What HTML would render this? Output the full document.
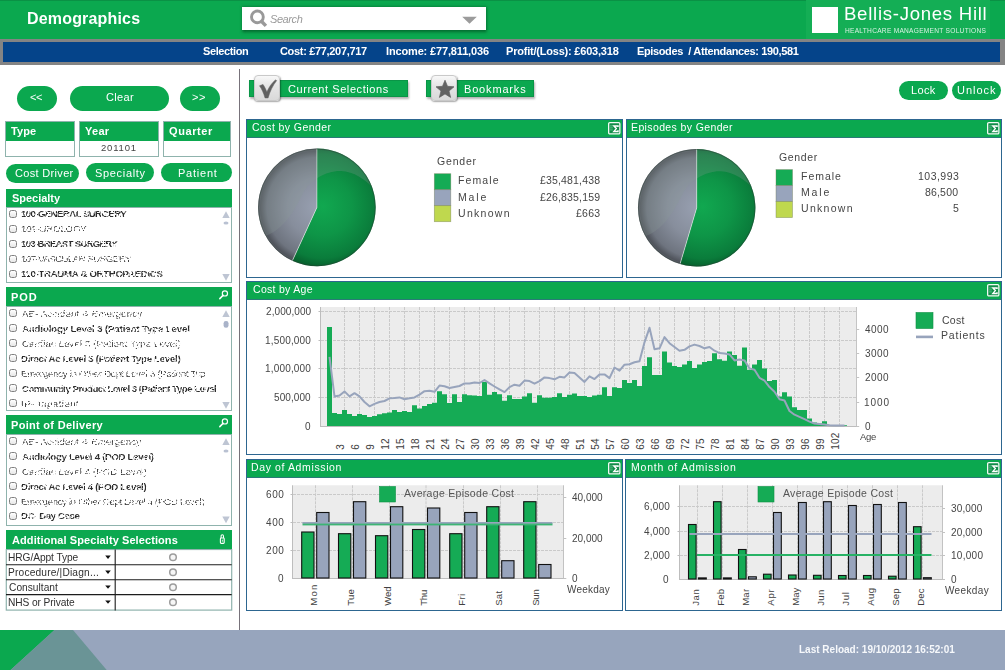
<!DOCTYPE html>
<html><head><meta charset="utf-8"><title>Demographics</title>
<style>
*{box-sizing:border-box;margin:0;padding:0}
html,body{width:1005px;height:670px;overflow:hidden;background:#fff;font-family:"Liberation Sans",sans-serif}
.abs,.t,.hd,.bx,.cb,.pn,.btn{position:absolute}
.t{white-space:pre;line-height:1;z-index:5;will-change:transform}
.btn{background:#0ba84f;border-radius:14px}
.hd{background:#0ba84f;left:6px;width:226px}
.bx{left:6px;width:226px;background:#fff;border:1px solid #8fb3ad}
.cb{left:9.3px;width:8px;height:8px;border:1px solid #808080;border-radius:2.5px;background:linear-gradient(#fff,#e6e6e6)}
.o1{filter:url(#ob1)}.o2{filter:url(#ob2)}
.pn{border:1px solid #2d6690;background:#fff}
.pn>div{background:#0ba84f;height:18px;border-bottom:1px solid #2a7a78}
svg text.xl{font-size:10px;fill:#3c3c3c;letter-spacing:0.25px}
svg text.xl2{font-size:9.6px;fill:#404040}
svg .g{stroke:#cacaca;stroke-width:1;stroke-dasharray:3 1}
.ic{width:26px;height:26px;border-radius:4px;border:1px solid #c9c9c9;background:linear-gradient(#f8f8f8,#e6e6e6 40%,#d9d9d9);box-shadow:0.5px 1px 1.5px rgba(0,0,0,.35)}
</style></head><body>
<svg width="0" height="0" style="position:absolute"><defs>
<filter id="ob1" x="0" y="0" width="100%" height="100%"><feTurbulence type="fractalNoise" baseFrequency="0.55 0.4" numOctaves="1" seed="4"/><feColorMatrix type="matrix" values="0 0 0 0 0 0 0 0 0 0 0 0 0 0 0 9 0 0 0 -3.4" result="m"/><feComposite in="SourceGraphic" in2="m" operator="in"/></filter>
<filter id="ob2" x="0" y="0" width="100%" height="100%"><feTurbulence type="fractalNoise" baseFrequency="0.6 0.45" numOctaves="1" seed="9"/><feColorMatrix type="matrix" values="0 0 0 0 0 0 0 0 0 0 0 0 0 0 0 22 0 0 0 -10.2" result="m"/><feComposite in="SourceGraphic" in2="m" operator="in"/></filter>
</defs></svg>
<!-- header -->
<div class="abs" style="left:0;top:0;width:1005px;height:38.5px;background:#0ba84f;border-top:1px solid #0a9145"></div>
<div class="abs" style="left:806px;top:0;width:184px;height:38.5px;background:#14ae55"></div>
<div class="abs" style="left:812px;top:7px;width:26px;height:25.5px;background:#fff"></div>
<div class="abs" style="left:242px;top:7.4px;width:244px;height:23px;background:#fff;box-shadow:0.5px 1px 3px 0.8px rgba(0,75,32,.75)"></div>
<svg class="abs" style="left:246px;top:8px" width="24" height="22"><circle cx="11.4" cy="8.9" r="5.9" fill="none" stroke="#999" stroke-width="2.9"/><line x1="15.2" y1="13" x2="19.9" y2="17.9" stroke="#999" stroke-width="3.4" stroke-linecap="butt"/></svg>
<svg class="abs" style="left:460px;top:14px" width="20" height="12"><path d="M2.2,2.8H16.8L9.5,9.8Z" fill="#9b9b9b"/></svg>
<div class="abs" style="left:0;top:38.5px;width:1005px;height:26.5px;background:#848484"></div>
<div class="abs" style="left:3px;top:42px;width:997px;height:20px;background:#05448a"></div>
<!-- left column -->
<div class="abs" style="left:239px;top:69px;width:1px;height:561px;background:#77727a"></div>
<div class="btn" style="left:17px;top:85.5px;width:40px;height:25.5px"></div>
<div class="btn" style="left:70px;top:85.5px;width:99px;height:25.5px"></div>
<div class="btn" style="left:180px;top:85.5px;width:40px;height:25.5px"></div>
<div class="btn" style="left:6px;top:164px;width:73px;height:19px"></div>
<div class="btn" style="left:86px;top:163px;width:68px;height:19px"></div>
<div class="btn" style="left:161px;top:163px;width:70.6px;height:19px"></div>
<div class="bx" style="left:5px;top:121.3px;width:70px;height:35.4px"><div style="background:#0ba84f;height:18.3px"></div></div>
<div class="bx" style="left:79px;top:121.3px;width:80px;height:35.4px"><div style="background:#0ba84f;height:18.3px"></div></div>
<div class="bx" style="left:163px;top:121.3px;width:68px;height:35.4px"><div style="background:#0ba84f;height:18.3px"></div></div>
<!-- specialty -->
<div class="hd" style="top:188.5px;height:19px"></div>
<div class="bx" style="top:207px;height:76px"></div>
<i class="cb" style="top:210.10000000000002px"></i><i class="cb" style="top:225.10000000000002px"></i><i class="cb" style="top:240.10000000000002px"></i><i class="cb" style="top:255.10000000000002px"></i><i class="cb" style="top:270.1px"></i><svg class="abs" style="left:219.6px;top:208.5px" width="12" height="73.5"><path d="M6,2.2L9.7,8.9H2.3Z" fill="#bec5d3"/><path d="M6,71.7L9.7,65.0H2.3Z" fill="#bec5d3"/><ellipse cx="6" cy="14.0" rx="2.5" ry="1.5" fill="#b9c1d2"/></svg>
<!-- POD -->
<div class="hd" style="top:287.3px;height:19px"></div><svg class="abs" style="left:218px;top:289.2px" width="12" height="12"><circle cx="6.9" cy="4.4" r="2.6" fill="none" stroke="#fff" stroke-width="1.15"/><line x1="5" y1="6.4" x2="1.8" y2="9.6" stroke="#fff" stroke-width="1.5" stroke-linecap="round"/></svg>
<div class="bx" style="top:306px;height:105px"></div>
<i class="cb" style="top:309.1px"></i><i class="cb" style="top:324.1px"></i><i class="cb" style="top:339.1px"></i><i class="cb" style="top:354.1px"></i><i class="cb" style="top:369.1px"></i><i class="cb" style="top:384.1px"></i><i class="cb" style="top:399.1px"></i><svg class="abs" style="left:219.6px;top:307.5px" width="12" height="102.5"><path d="M6,2.2L9.7,8.9H2.3Z" fill="#bec5d3"/><path d="M6,100.7L9.7,94.0H2.3Z" fill="#bec5d3"/><rect x="3.6" y="13.0" width="4.9" height="6.8" rx="2.3" fill="#a9b3c9"/></svg>
<!-- point of delivery -->
<div class="hd" style="top:414.8px;height:19.6px"></div><svg class="abs" style="left:218px;top:417.2px" width="12" height="12"><circle cx="6.9" cy="4.4" r="2.6" fill="none" stroke="#fff" stroke-width="1.15"/><line x1="5" y1="6.4" x2="1.8" y2="9.6" stroke="#fff" stroke-width="1.5" stroke-linecap="round"/></svg>
<div class="bx" style="top:434px;height:91.5px"></div>
<i class="cb" style="top:437.1px"></i><i class="cb" style="top:452.1px"></i><i class="cb" style="top:467.1px"></i><i class="cb" style="top:482.1px"></i><i class="cb" style="top:497.1px"></i><i class="cb" style="top:512.0999999999999px"></i><svg class="abs" style="left:219.6px;top:435.5px" width="12" height="89.0"><path d="M6,2.2L9.7,8.9H2.3Z" fill="#bec5d3"/><path d="M6,87.2L9.7,80.5H2.3Z" fill="#bec5d3"/><ellipse cx="6" cy="15.0" rx="2.5" ry="1.5" fill="#b9c1d2"/></svg>
<!-- additional -->
<div class="hd" style="top:530.2px;height:19.3px"></div>
<svg class="abs" style="left:217px;top:533px" width="12" height="14"><rect x="3.4" y="5" width="3.8" height="5.4" rx="0.8" fill="#0ba84f" stroke="#fff" stroke-width="1.1"/><path d="M4.1,5V3.2a1.2,1.4 0 0 1 2.4,0V5" fill="none" stroke="#fff" stroke-width="1.05"/><rect x="4.9" y="6.7" width="0.8" height="2" fill="#fff"/></svg>
<svg class="abs" style="left:5px;top:549px" width="229" height="63">
<rect x="1.3" y="0.5" width="225.4" height="60.6" fill="#fff" stroke="#8fb3ad" stroke-width="1.2"/>
<g stroke="#1c1c1c" stroke-width="1.1"><line x1="1" x2="226.7" y1="15.7" y2="15.7"/><line x1="1" x2="226.7" y1="30.7" y2="30.7"/><line x1="1" x2="226.7" y1="45.6" y2="45.6"/><line x1="110.2" x2="110.2" y1="0.5" y2="61.5"/></g>
<g fill="#111"><path d="M100.2,6.6h5.6l-2.8,3.3z"/><path d="M100.2,21.6h5.6l-2.8,3.3z"/><path d="M100.2,36.5h5.6l-2.8,3.3z"/><path d="M100.2,51.5h5.6l-2.8,3.3z"/></g>
<g fill="#f6f6f6" stroke="#9d9d9d" stroke-width="1.5"><circle cx="168" cy="8.3" r="3.3"/><circle cx="168" cy="23.3" r="3.3"/><circle cx="168" cy="38.2" r="3.3"/><circle cx="168" cy="53.2" r="3.3"/></g>
</svg>
<!-- toolbar -->
<div class="abs" style="left:249px;top:80px;width:159px;height:16.7px;background:#0ba84f;border:1px solid #0a9547;box-shadow:1px 1.5px 2px rgba(0,0,0,.3)"></div>
<div class="abs ic" style="left:254.3px;top:75.2px"></div>
<svg class="abs" style="left:254.5px;top:75.5px;z-index:3" width="26" height="26"><path d="M4.5,9.8L8,8.4C9.6,10.8 11,13.5 11.9,16C14,11 16.8,7 20.4,3.9L21.7,4.6C17.8,9.5 15,15.2 13.1,21.9H10C8.6,17 6.8,13 4.5,9.8Z" fill="#606060" stroke="#606060" stroke-width="0.5" stroke-linejoin="round"/></svg>
<div class="abs" style="left:426px;top:80px;width:108px;height:16.7px;background:#0ba84f;border:1px solid #0a9547;box-shadow:1px 1.5px 2px rgba(0,0,0,.3)"></div>
<div class="abs ic" style="left:431.3px;top:75.2px"></div>
<svg class="abs" style="left:431.5px;top:75.5px;z-index:3" width="26" height="26"><path d="M13,4.2L15.5,10.3 22,10.8 17,15 18.6,21.4 13,17.9 7.4,21.4 9,15 4,10.8 10.5,10.3Z" fill="#626262" stroke="#626262" stroke-width="0.7" stroke-linejoin="round"/></svg>
<div class="btn" style="left:899px;top:81px;width:49px;height:18.5px"></div>
<div class="btn" style="left:952px;top:81px;width:49px;height:18.5px"></div>
<!-- panels -->
<div class="pn" style="left:246px;top:119px;width:377px;height:159px"><div></div></div>
<div class="pn" style="left:626px;top:119px;width:376px;height:159px"><div></div></div>
<div class="pn" style="left:246px;top:281px;width:756px;height:174px"><div></div></div>
<div class="pn" style="left:246px;top:459px;width:377px;height:152px"><div></div></div>
<div class="pn" style="left:625px;top:459px;width:377px;height:152px"><div></div></div>
<svg class="abs" style="left:0;top:0;z-index:2" width="1005" height="630" font-family="Liberation Sans, sans-serif">
<g transform="translate(608,122)"><rect x="0.65" y="0.65" width="11.2" height="11.3" rx="1.2" fill="#128d48" stroke="#f1faf4" stroke-width="1.3"/><path d="M2,3.9H4.8M2,5.9H4.8M2,7.9H4.8" stroke="#58c588" stroke-width="0.9"/><path d="M10,5V3.9H5.9L8.3,6.6 5.9,9.4H10V8.3" fill="none" stroke="#fff" stroke-width="1.45" stroke-linejoin="miter"/></g><g transform="translate(987,122)"><rect x="0.65" y="0.65" width="11.2" height="11.3" rx="1.2" fill="#128d48" stroke="#f1faf4" stroke-width="1.3"/><path d="M2,3.9H4.8M2,5.9H4.8M2,7.9H4.8" stroke="#58c588" stroke-width="0.9"/><path d="M10,5V3.9H5.9L8.3,6.6 5.9,9.4H10V8.3" fill="none" stroke="#fff" stroke-width="1.45" stroke-linejoin="miter"/></g><g transform="translate(987,284)"><rect x="0.65" y="0.65" width="11.2" height="11.3" rx="1.2" fill="#128d48" stroke="#f1faf4" stroke-width="1.3"/><path d="M2,3.9H4.8M2,5.9H4.8M2,7.9H4.8" stroke="#58c588" stroke-width="0.9"/><path d="M10,5V3.9H5.9L8.3,6.6 5.9,9.4H10V8.3" fill="none" stroke="#fff" stroke-width="1.45" stroke-linejoin="miter"/></g><g transform="translate(608,462)"><rect x="0.65" y="0.65" width="11.2" height="11.3" rx="1.2" fill="#128d48" stroke="#f1faf4" stroke-width="1.3"/><path d="M2,3.9H4.8M2,5.9H4.8M2,7.9H4.8" stroke="#58c588" stroke-width="0.9"/><path d="M10,5V3.9H5.9L8.3,6.6 5.9,9.4H10V8.3" fill="none" stroke="#fff" stroke-width="1.45" stroke-linejoin="miter"/></g><g transform="translate(987,462)"><rect x="0.65" y="0.65" width="11.2" height="11.3" rx="1.2" fill="#128d48" stroke="#f1faf4" stroke-width="1.3"/><path d="M2,3.9H4.8M2,5.9H4.8M2,7.9H4.8" stroke="#58c588" stroke-width="0.9"/><path d="M10,5V3.9H5.9L8.3,6.6 5.9,9.4H10V8.3" fill="none" stroke="#fff" stroke-width="1.45" stroke-linejoin="miter"/></g>
<defs><radialGradient id="gga" cx="322.9" cy="206.4" r="64.8" fx="322.9" fy="206.4" gradientUnits="userSpaceOnUse"><stop offset="0" stop-color="#11a850"/><stop offset="0.45" stop-color="#0e9547"/><stop offset="0.8" stop-color="#0a7c3b"/><stop offset="0.93" stop-color="#07612e"/><stop offset="1" stop-color="#06572a"/></radialGradient><radialGradient id="gra" cx="316.9" cy="207.4" r="58.8" gradientUnits="userSpaceOnUse"><stop offset="0" stop-color="#98a0b1"/><stop offset="0.5" stop-color="#878e9c"/><stop offset="0.85" stop-color="#6e747f"/><stop offset="0.96" stop-color="#50545c"/><stop offset="1" stop-color="#5c6169"/></radialGradient><clipPath id="cpa"><circle cx="316.9" cy="207.4" r="58.8"/></clipPath></defs>
<path d="M316.9,207.4L316.9,148.60000000000002A58.8,58.8 0 1 1 292.33,260.82Z" fill="url(#gga)"/>
<path d="M316.9,207.4L292.33,260.82A58.8,58.8 0 0 1 316.9,148.60000000000002Z" fill="url(#gra)"/>
<g clip-path="url(#cpa)"><g transform="translate(316.9,207.4)"><path fill="#8a9a96" fill-opacity="0.26" d="M-60,31C-38,27 -26,10 -15,-12C-8,-28 10,-37 24,-36.5C38,-36 50,-27 62,-14V-70H-70Z"/></g></g>
<line x1="316.9" y1="207.4" x2="316.9" y2="148.60000000000002" stroke="#d8f0e0" stroke-width="0.7" stroke-opacity="0.85"/>
<line x1="316.9" y1="207.4" x2="292.33" y2="260.82" stroke="#e4ece8" stroke-width="0.7" stroke-opacity="0.9"/>
<circle cx="316.9" cy="207.4" r="58.4" fill="none" stroke="#2d3b36" stroke-opacity="0.45" stroke-width="1"/><rect x="434.3" y="173.7" width="16.5" height="16" fill="#15ab55" stroke="#6f7a55" stroke-opacity="0.55" stroke-width="0.7"/><rect x="434.3" y="189.7" width="16.5" height="16" fill="#98a4bc" stroke="#6f7a55" stroke-opacity="0.55" stroke-width="0.7"/><rect x="434.3" y="205.7" width="16.5" height="16" fill="#bfd84e" stroke="#6f7a55" stroke-opacity="0.55" stroke-width="0.7"/>
<defs><radialGradient id="ggb" cx="702.7" cy="206.8" r="64.7" fx="702.7" fy="206.8" gradientUnits="userSpaceOnUse"><stop offset="0" stop-color="#11a850"/><stop offset="0.45" stop-color="#0e9547"/><stop offset="0.8" stop-color="#0a7c3b"/><stop offset="0.93" stop-color="#07612e"/><stop offset="1" stop-color="#06572a"/></radialGradient><radialGradient id="grb" cx="696.7" cy="207.8" r="58.7" gradientUnits="userSpaceOnUse"><stop offset="0" stop-color="#98a0b1"/><stop offset="0.5" stop-color="#878e9c"/><stop offset="0.85" stop-color="#6e747f"/><stop offset="0.96" stop-color="#50545c"/><stop offset="1" stop-color="#5c6169"/></radialGradient><clipPath id="cpb"><circle cx="696.7" cy="207.8" r="58.7"/></clipPath></defs>
<path d="M696.7,207.8L696.7,149.10000000000002A58.7,58.7 0 1 1 680.03,264.08Z" fill="url(#ggb)"/>
<path d="M696.7,207.8L680.03,264.08A58.7,58.7 0 0 1 696.7,149.10000000000002Z" fill="url(#grb)"/>
<g clip-path="url(#cpb)"><g transform="translate(696.7,207.8)"><path fill="#8a9a96" fill-opacity="0.26" d="M-60,31C-38,27 -26,10 -15,-12C-8,-28 10,-37 24,-36.5C38,-36 50,-27 62,-14V-70H-70Z"/></g></g>
<line x1="696.7" y1="207.8" x2="696.7" y2="149.10000000000002" stroke="#d8f0e0" stroke-width="0.7" stroke-opacity="0.85"/>
<line x1="696.7" y1="207.8" x2="680.03" y2="264.08" stroke="#e4ece8" stroke-width="0.7" stroke-opacity="0.9"/>
<circle cx="696.7" cy="207.8" r="58.300000000000004" fill="none" stroke="#2d3b36" stroke-opacity="0.45" stroke-width="1"/><rect x="776" y="169.6" width="16.5" height="16" fill="#15ab55" stroke="#6f7a55" stroke-opacity="0.55" stroke-width="0.7"/><rect x="776" y="185.6" width="16.5" height="16" fill="#98a4bc" stroke="#6f7a55" stroke-opacity="0.55" stroke-width="0.7"/><rect x="776" y="201.6" width="16.5" height="16" fill="#bfd84e" stroke="#6f7a55" stroke-opacity="0.55" stroke-width="0.7"/>
<rect x="320.5" y="307" width="536" height="119" fill="#ececec"/>
<line x1="321" x2="856" y1="311.5" y2="311.5" class="g"/>
<line x1="321" x2="856" y1="340.5" y2="340.5" class="g"/>
<line x1="321" x2="856" y1="368.5" y2="368.5" class="g"/>
<line x1="321" x2="856" y1="397.5" y2="397.5" class="g"/>
<line x1="344.5" x2="344.5" y1="307" y2="426" class="g"/>
<line x1="359.5" x2="359.5" y1="307" y2="426" class="g"/>
<line x1="374.5" x2="374.5" y1="307" y2="426" class="g"/>
<line x1="389.5" x2="389.5" y1="307" y2="426" class="g"/>
<line x1="404.5" x2="404.5" y1="307" y2="426" class="g"/>
<line x1="419.5" x2="419.5" y1="307" y2="426" class="g"/>
<line x1="434.5" x2="434.5" y1="307" y2="426" class="g"/>
<line x1="449.5" x2="449.5" y1="307" y2="426" class="g"/>
<line x1="464.5" x2="464.5" y1="307" y2="426" class="g"/>
<line x1="479.5" x2="479.5" y1="307" y2="426" class="g"/>
<line x1="494.5" x2="494.5" y1="307" y2="426" class="g"/>
<line x1="509.5" x2="509.5" y1="307" y2="426" class="g"/>
<line x1="524.5" x2="524.5" y1="307" y2="426" class="g"/>
<line x1="539.5" x2="539.5" y1="307" y2="426" class="g"/>
<line x1="554.5" x2="554.5" y1="307" y2="426" class="g"/>
<line x1="569.5" x2="569.5" y1="307" y2="426" class="g"/>
<line x1="584.5" x2="584.5" y1="307" y2="426" class="g"/>
<line x1="599.5" x2="599.5" y1="307" y2="426" class="g"/>
<line x1="614.5" x2="614.5" y1="307" y2="426" class="g"/>
<line x1="629.5" x2="629.5" y1="307" y2="426" class="g"/>
<line x1="644.5" x2="644.5" y1="307" y2="426" class="g"/>
<line x1="659.5" x2="659.5" y1="307" y2="426" class="g"/>
<line x1="674.5" x2="674.5" y1="307" y2="426" class="g"/>
<line x1="689.5" x2="689.5" y1="307" y2="426" class="g"/>
<line x1="704.5" x2="704.5" y1="307" y2="426" class="g"/>
<line x1="719.5" x2="719.5" y1="307" y2="426" class="g"/>
<line x1="734.5" x2="734.5" y1="307" y2="426" class="g"/>
<line x1="749.5" x2="749.5" y1="307" y2="426" class="g"/>
<line x1="764.5" x2="764.5" y1="307" y2="426" class="g"/>
<line x1="779.5" x2="779.5" y1="307" y2="426" class="g"/>
<line x1="794.5" x2="794.5" y1="307" y2="426" class="g"/>
<line x1="809.5" x2="809.5" y1="307" y2="426" class="g"/>
<line x1="824.5" x2="824.5" y1="307" y2="426" class="g"/>
<line x1="839.5" x2="839.5" y1="307" y2="426" class="g"/>
<path d="M327.0,426.0L327.0,327.1L332.0,327.1L332.0,413.0L337.0,413.0L337.0,414.0L342.0,414.0L342.0,410.0L347.0,410.0L347.0,414.0L352.0,414.0L352.0,416.0L357.0,416.0L357.0,414.0L362.0,414.0L362.0,415.0L367.0,415.0L367.0,417.0L372.0,417.0L372.0,416.0L377.0,416.0L377.0,414.3L382.0,414.3L382.0,413.3L387.0,413.3L387.0,412.4L392.0,412.4L392.0,410.0L397.0,410.0L397.0,412.0L402.0,412.0L402.0,411.0L407.0,411.0L407.0,412.0L412.0,412.0L412.0,405.3L417.0,405.3L417.0,408.6L422.0,408.6L422.0,406.0L427.0,406.0L427.0,404.0L432.0,404.0L432.0,402.7L437.0,402.7L437.0,391.3L442.0,391.3L442.0,394.3L447.0,394.3L447.0,403.0L452.0,403.0L452.0,394.3L457.0,394.3L457.0,402.0L462.0,402.0L462.0,394.3L467.0,394.3L467.0,395.2L472.0,395.2L472.0,395.6L477.0,395.6L477.0,396.1L482.0,396.1L482.0,382.0L487.0,382.0L487.0,394.7L492.0,394.7L492.0,391.9L497.0,391.9L497.0,394.3L502.0,394.3L502.0,400.8L507.0,400.8L507.0,395.2L512.0,395.2L512.0,399.0L517.0,399.0L517.0,399.0L522.0,399.0L522.0,396.5L527.0,396.5L527.0,393.2L532.0,393.2L532.0,402.7L537.0,402.7L537.0,395.2L542.0,395.2L542.0,397.8L547.0,397.8L547.0,397.8L552.0,397.8L552.0,397.1L557.0,397.1L557.0,393.2L562.0,393.2L562.0,396.9L567.0,396.9L567.0,394.7L572.0,394.7L572.0,393.4L577.0,393.4L577.0,396.0L582.0,396.0L582.0,396.0L587.0,396.0L587.0,396.9L592.0,396.9L592.0,395.6L597.0,395.6L597.0,394.7L602.0,394.7L602.0,387.2L607.0,387.2L607.0,396.1L612.0,396.1L612.0,387.2L617.0,387.2L617.0,388.1L622.0,388.1L622.0,380.1L627.0,380.1L627.0,383.1L632.0,383.1L632.0,380.1L637.0,380.1L637.0,385.9L642.0,385.9L642.0,366.1L647.0,366.1L647.0,357.3L652.0,357.3L652.0,375.1L657.0,375.1L657.0,375.1L662.0,375.1L662.0,351.4L667.0,351.4L667.0,362.4L672.0,362.4L672.0,366.1L677.0,366.1L677.0,367.0L682.0,367.0L682.0,364.4L687.0,364.4L687.0,361.1L692.0,361.1L692.0,368.0L697.0,368.0L697.0,364.4L702.0,364.4L702.0,362.0L707.0,362.0L707.0,361.1L712.0,361.1L712.0,353.2L717.0,353.2L717.0,359.2L722.0,359.2L722.0,360.7L727.0,360.7L727.0,351.4L732.0,351.4L732.0,355.1L737.0,355.1L737.0,365.7L742.0,365.7L742.0,347.5L747.0,347.5L747.0,369.8L752.0,369.8L752.0,364.4L757.0,364.4L757.0,360.1L762.0,360.1L762.0,368.5L767.0,368.5L767.0,381.0L772.0,381.0L772.0,380.1L777.0,380.1L777.0,396.5L782.0,396.5L782.0,392.2L787.0,392.2L787.0,396.5L792.0,396.5L792.0,407.3L797.0,407.3L797.0,410.1L802.0,410.1L802.0,410.1L807.0,410.1L807.0,418.4L812.0,418.4L812.0,422.6L817.0,422.6L817.0,423.6L822.0,423.6L822.0,421.3L827.0,421.3L827.0,424.9L832.0,424.9L832.0,425.2L837.0,425.2L837.0,425.2L842.0,425.2L842.0,425.2L847.0,425.2L847.0,426.0Z" fill="#15ab55"/>
<line x1="320.5" x2="320.5" y1="307" y2="426.5" stroke="#bdbdbd"/>
<line x1="320" x2="857" y1="426.5" y2="426.5" stroke="#bdbdbd"/>
<line x1="856.5" x2="856.5" y1="307" y2="426.5" stroke="#c4c4c4"/>
<line x1="318.5" x2="321" y1="311.5" y2="311.5" stroke="#bdbdbd"/>
<line x1="318.5" x2="321" y1="340.5" y2="340.5" stroke="#bdbdbd"/>
<line x1="318.5" x2="321" y1="368.5" y2="368.5" stroke="#bdbdbd"/>
<line x1="318.5" x2="321" y1="397.5" y2="397.5" stroke="#bdbdbd"/>
<line x1="857" x2="859.2" y1="329.5" y2="329.5" stroke="#c4c4c4"/>
<line x1="857" x2="859.2" y1="353.5" y2="353.5" stroke="#c4c4c4"/>
<line x1="857" x2="859.2" y1="377.5" y2="377.5" stroke="#c4c4c4"/>
<line x1="857" x2="859.2" y1="402.5" y2="402.5" stroke="#c4c4c4"/>
<line x1="857" x2="859.2" y1="426.5" y2="426.5" stroke="#c4c4c4"/>
<polyline points="329.5,356.9 334.5,396.4 339.5,395.5 344.5,391.4 349.5,396.4 354.5,393.2 359.5,396.4 364.5,402.0 369.5,406.3 374.5,403.9 379.5,402.0 384.5,401.0 389.5,398.3 394.5,398.0 399.5,397.4 404.5,399.2 409.5,398.3 414.5,397.4 419.5,394.6 424.5,391.2 429.5,390.8 434.5,391.8 439.5,385.6 444.5,386.2 449.5,388.0 454.5,387.0 459.5,386.0 464.5,383.4 469.5,383.4 474.5,382.4 479.5,383.0 484.5,380.0 489.5,383.4 494.5,386.5 499.5,389.3 504.5,392.1 509.5,387.1 514.5,384.7 519.5,385.8 524.5,380.6 529.5,381.1 534.5,383.7 539.5,381.1 544.5,377.4 549.5,378.1 554.5,379.3 559.5,376.8 564.5,377.4 569.5,372.5 574.5,373.1 579.5,377.4 584.5,381.9 589.5,376.3 594.5,379.1 599.5,374.4 604.5,374.4 609.5,378.1 614.5,367.5 619.5,370.7 624.5,364.7 629.5,364.3 634.5,362.3 639.5,361.3 644.5,342.3 649.5,327.8 654.5,349.2 659.5,348.3 664.5,337.1 669.5,343.2 674.5,347.0 679.5,350.7 684.5,349.8 689.5,346.4 694.5,344.6 699.5,346.0 704.5,348.3 709.5,347.0 714.5,350.7 719.5,353.1 724.5,353.5 729.5,354.4 734.5,360.4 739.5,359.5 744.5,360.4 749.5,368.4 754.5,369.7 759.5,377.8 764.5,380.6 769.5,387.1 774.5,391.8 779.5,399.2 784.5,400.5 789.5,411.0 794.5,414.7 799.5,416.9 804.5,419.2 809.5,421.6 814.5,423.5 819.5,424.0 824.5,424.4 829.5,425.3 834.5,425.5 839.5,425.5 844.5,425.5" fill="none" stroke="#98a4bc" stroke-width="2" stroke-linejoin="round"/>
<text transform="translate(343.7,449.8) rotate(-90)" class="xl">3</text>
<text transform="translate(358.7,449.8) rotate(-90)" class="xl">6</text>
<text transform="translate(373.7,449.8) rotate(-90)" class="xl">9</text>
<text transform="translate(388.7,449.8) rotate(-90)" class="xl">12</text>
<text transform="translate(403.7,449.8) rotate(-90)" class="xl">15</text>
<text transform="translate(418.7,449.8) rotate(-90)" class="xl">18</text>
<text transform="translate(433.7,449.8) rotate(-90)" class="xl">21</text>
<text transform="translate(448.7,449.8) rotate(-90)" class="xl">24</text>
<text transform="translate(463.7,449.8) rotate(-90)" class="xl">27</text>
<text transform="translate(478.7,449.8) rotate(-90)" class="xl">30</text>
<text transform="translate(493.7,449.8) rotate(-90)" class="xl">33</text>
<text transform="translate(508.7,449.8) rotate(-90)" class="xl">36</text>
<text transform="translate(523.7,449.8) rotate(-90)" class="xl">39</text>
<text transform="translate(538.7,449.8) rotate(-90)" class="xl">42</text>
<text transform="translate(553.7,449.8) rotate(-90)" class="xl">45</text>
<text transform="translate(568.7,449.8) rotate(-90)" class="xl">48</text>
<text transform="translate(583.7,449.8) rotate(-90)" class="xl">51</text>
<text transform="translate(598.7,449.8) rotate(-90)" class="xl">54</text>
<text transform="translate(613.7,449.8) rotate(-90)" class="xl">57</text>
<text transform="translate(628.7,449.8) rotate(-90)" class="xl">60</text>
<text transform="translate(643.7,449.8) rotate(-90)" class="xl">63</text>
<text transform="translate(658.7,449.8) rotate(-90)" class="xl">66</text>
<text transform="translate(673.7,449.8) rotate(-90)" class="xl">69</text>
<text transform="translate(688.7,449.8) rotate(-90)" class="xl">72</text>
<text transform="translate(703.7,449.8) rotate(-90)" class="xl">75</text>
<text transform="translate(718.7,449.8) rotate(-90)" class="xl">78</text>
<text transform="translate(733.7,449.8) rotate(-90)" class="xl">81</text>
<text transform="translate(748.7,449.8) rotate(-90)" class="xl">84</text>
<text transform="translate(763.7,449.8) rotate(-90)" class="xl">87</text>
<text transform="translate(778.7,449.8) rotate(-90)" class="xl">90</text>
<text transform="translate(793.7,449.8) rotate(-90)" class="xl">93</text>
<text transform="translate(808.7,449.8) rotate(-90)" class="xl">96</text>
<text transform="translate(823.7,449.8) rotate(-90)" class="xl">99</text>
<text transform="translate(838.7,449.8) rotate(-90)" class="xl">102</text>
<rect x="916" y="312.5" width="17" height="16" fill="#15ab55" stroke="#0e8f45" stroke-width="0.6"/>
<rect x="916" y="335.6" width="17" height="2.6" fill="#98a4bc"/><rect x="292.5" y="485.3" width="271" height="92.7" fill="#ececec"/>
<line x1="293" x2="563.5" y1="494.5" y2="494.5" class="g"/>
<line x1="293" x2="563.5" y1="522.5" y2="522.5" class="g"/>
<line x1="293" x2="563.5" y1="550.5" y2="550.5" class="g"/>
<line x1="315.5" x2="315.5" y1="485.3" y2="578" class="g"/>
<line x1="352.5" x2="352.5" y1="485.3" y2="578" class="g"/>
<line x1="389.5" x2="389.5" y1="485.3" y2="578" class="g"/>
<line x1="426" x2="426" y1="485.3" y2="578" class="g"/>
<line x1="463.5" x2="463.5" y1="485.3" y2="578" class="g"/>
<line x1="500.5" x2="500.5" y1="485.3" y2="578" class="g"/>
<line x1="537.5" x2="537.5" y1="485.3" y2="578" class="g"/>
<line x1="292.5" x2="292.5" y1="485.3" y2="578.5" stroke="#bdbdbd"/>
<line x1="292" x2="564" y1="578.5" y2="578.5" stroke="#bdbdbd"/>
<line x1="563.5" x2="563.5" y1="485.3" y2="578.5" stroke="#c2c2c2"/>
<line x1="290.5" x2="293" y1="494.5" y2="494.5" stroke="#bdbdbd"/>
<line x1="290.5" x2="293" y1="522.5" y2="522.5" stroke="#bdbdbd"/>
<line x1="290.5" x2="293" y1="550.5" y2="550.5" stroke="#bdbdbd"/>
<line x1="564" x2="566.3" y1="497.5" y2="497.5" stroke="#c2c2c2"/>
<line x1="564" x2="566.3" y1="538.5" y2="538.5" stroke="#c2c2c2"/>
<line x1="564" x2="566.3" y1="578.5" y2="578.5" stroke="#c2c2c2"/>
<rect x="301.7" y="532.0" width="12.3" height="46.0" fill="#15ab55" stroke="#111" stroke-width="1.1"/>
<rect x="316.7" y="512.5" width="12.3" height="65.5" fill="#98a4bc" stroke="#111" stroke-width="1.1"/>
<rect x="338.5" y="533.7" width="12.3" height="44.3" fill="#15ab55" stroke="#111" stroke-width="1.1"/>
<rect x="353.5" y="501.7" width="12.3" height="76.3" fill="#98a4bc" stroke="#111" stroke-width="1.1"/>
<rect x="375.5" y="535.7" width="12.3" height="42.3" fill="#15ab55" stroke="#111" stroke-width="1.1"/>
<rect x="390.5" y="506.7" width="12.3" height="71.3" fill="#98a4bc" stroke="#111" stroke-width="1.1"/>
<rect x="412.5" y="529.5" width="12.3" height="48.5" fill="#15ab55" stroke="#111" stroke-width="1.1"/>
<rect x="427.5" y="508.0" width="12.3" height="70.0" fill="#98a4bc" stroke="#111" stroke-width="1.1"/>
<rect x="449.7" y="533.7" width="12.3" height="44.3" fill="#15ab55" stroke="#111" stroke-width="1.1"/>
<rect x="464.7" y="512.5" width="12.3" height="65.5" fill="#98a4bc" stroke="#111" stroke-width="1.1"/>
<rect x="486.7" y="506.7" width="12.3" height="71.3" fill="#15ab55" stroke="#111" stroke-width="1.1"/>
<rect x="501.7" y="560.7" width="12.3" height="17.3" fill="#98a4bc" stroke="#111" stroke-width="1.1"/>
<rect x="523.7" y="501.7" width="12.3" height="76.3" fill="#15ab55" stroke="#111" stroke-width="1.1"/>
<rect x="538.7" y="564.5" width="12.3" height="13.5" fill="#98a4bc" stroke="#111" stroke-width="1.1"/>
<rect x="302.5" y="522" width="250" height="2" fill="#98a4bc"/>
<rect x="302.5" y="523.6" width="250" height="1.8" fill="#3db574"/>
<rect x="379.5" y="486.5" width="16" height="15.5" fill="#15ab55" stroke="#0e8f45" stroke-width="0.6"/>
<text transform="translate(316.7,605.8) rotate(-90)" class="xl2" textLength="21.1" lengthAdjust="spacing">Mon</text>
<text transform="translate(353.7,605.8) rotate(-90)" class="xl2" textLength="16.6" lengthAdjust="spacing">Tue</text>
<text transform="translate(390.7,605.8) rotate(-90)" class="xl2" textLength="19.400000000000002" lengthAdjust="spacing">Wed</text>
<text transform="translate(427.2,605.8) rotate(-90)" class="xl2" textLength="16.1" lengthAdjust="spacing">Thu</text>
<text transform="translate(464.7,605.8) rotate(-90)" class="xl2" textLength="11.9" lengthAdjust="spacing">Fri</text>
<text transform="translate(501.7,605.8) rotate(-90)" class="xl2" textLength="14.9" lengthAdjust="spacing">Sat</text>
<text transform="translate(538.7,605.8) rotate(-90)" class="xl2" textLength="16.6" lengthAdjust="spacing">Sun</text><rect x="679.5" y="485.3" width="263" height="93.7" fill="#ececec"/>
<line x1="680" x2="942.5" y1="506.5" y2="506.5" class="g"/>
<line x1="680" x2="942.5" y1="531.5" y2="531.5" class="g"/>
<line x1="680" x2="942.5" y1="555.5" y2="555.5" class="g"/>
<line x1="697.5" x2="697.5" y1="485.3" y2="579" class="g"/>
<line x1="722.5" x2="722.5" y1="485.3" y2="579" class="g"/>
<line x1="747.5" x2="747.5" y1="485.3" y2="579" class="g"/>
<line x1="772.5" x2="772.5" y1="485.3" y2="579" class="g"/>
<line x1="797.5" x2="797.5" y1="485.3" y2="579" class="g"/>
<line x1="822.5" x2="822.5" y1="485.3" y2="579" class="g"/>
<line x1="847.5" x2="847.5" y1="485.3" y2="579" class="g"/>
<line x1="872.5" x2="872.5" y1="485.3" y2="579" class="g"/>
<line x1="897.5" x2="897.5" y1="485.3" y2="579" class="g"/>
<line x1="922.5" x2="922.5" y1="485.3" y2="579" class="g"/>
<line x1="679.5" x2="679.5" y1="485.3" y2="579.5" stroke="#bdbdbd"/>
<line x1="679" x2="943" y1="579.5" y2="579.5" stroke="#bdbdbd"/>
<line x1="942.5" x2="942.5" y1="485.3" y2="579.5" stroke="#c2c2c2"/>
<line x1="677.5" x2="680" y1="506.5" y2="506.5" stroke="#bdbdbd"/>
<line x1="677.5" x2="680" y1="531.5" y2="531.5" stroke="#bdbdbd"/>
<line x1="677.5" x2="680" y1="555.5" y2="555.5" stroke="#bdbdbd"/>
<line x1="942.5" x2="945" y1="508.5" y2="508.5" stroke="#c2c2c2"/>
<line x1="942.5" x2="945" y1="532.5" y2="532.5" stroke="#c2c2c2"/>
<line x1="942.5" x2="945" y1="555.5" y2="555.5" stroke="#c2c2c2"/>
<line x1="942.5" x2="945" y1="579.5" y2="579.5" stroke="#c2c2c2"/>
<rect x="688.5" y="524.5" width="7.6" height="54.5" fill="#15ab55" stroke="#111" stroke-width="1.1"/>
<rect x="698.5" y="577.9" width="7.8" height="1.1" fill="#98a4bc" stroke="#111" stroke-width="1.1"/>
<rect x="713.5" y="501.7" width="7.6" height="77.3" fill="#15ab55" stroke="#111" stroke-width="1.1"/>
<rect x="723.5" y="577.9" width="7.8" height="1.1" fill="#98a4bc" stroke="#111" stroke-width="1.1"/>
<rect x="738.5" y="549.5" width="7.6" height="29.5" fill="#15ab55" stroke="#111" stroke-width="1.1"/>
<rect x="748.5" y="576.8" width="7.8" height="2.2" fill="#98a4bc" stroke="#111" stroke-width="1.1"/>
<rect x="763.5" y="574.2" width="7.6" height="4.8" fill="#15ab55" stroke="#111" stroke-width="1.1"/>
<rect x="773.5" y="512.5" width="7.8" height="66.5" fill="#98a4bc" stroke="#111" stroke-width="1.1"/>
<rect x="788.5" y="575.0" width="7.6" height="4.0" fill="#15ab55" stroke="#111" stroke-width="1.1"/>
<rect x="798.5" y="502.5" width="7.8" height="76.5" fill="#98a4bc" stroke="#111" stroke-width="1.1"/>
<rect x="813.5" y="575.3" width="7.6" height="3.7" fill="#15ab55" stroke="#111" stroke-width="1.1"/>
<rect x="823.5" y="501.7" width="7.8" height="77.3" fill="#98a4bc" stroke="#111" stroke-width="1.1"/>
<rect x="838.5" y="575.5" width="7.6" height="3.5" fill="#15ab55" stroke="#111" stroke-width="1.1"/>
<rect x="848.5" y="505.5" width="7.8" height="73.5" fill="#98a4bc" stroke="#111" stroke-width="1.1"/>
<rect x="863.5" y="575.5" width="7.6" height="3.5" fill="#15ab55" stroke="#111" stroke-width="1.1"/>
<rect x="873.5" y="504.5" width="7.8" height="74.5" fill="#98a4bc" stroke="#111" stroke-width="1.1"/>
<rect x="888.5" y="576.2" width="7.6" height="2.8" fill="#15ab55" stroke="#111" stroke-width="1.1"/>
<rect x="898.5" y="502.5" width="7.8" height="76.5" fill="#98a4bc" stroke="#111" stroke-width="1.1"/>
<rect x="913.5" y="526.7" width="7.6" height="52.3" fill="#15ab55" stroke="#111" stroke-width="1.1"/>
<rect x="923.5" y="577.7" width="7.8" height="1.3" fill="#98a4bc" stroke="#111" stroke-width="1.1"/>
<rect x="689.5" y="533" width="242" height="2" fill="#98a4bc"/>
<rect x="697" y="554" width="234.5" height="2" fill="#27b265"/>
<rect x="758" y="486.5" width="16" height="15.5" fill="#15ab55" stroke="#0e8f45" stroke-width="0.6"/>
<text transform="translate(698.7,605.8) rotate(-90)" class="xl2" textLength="16.6" lengthAdjust="spacing">Jan</text>
<text transform="translate(723.7,605.8) rotate(-90)" class="xl2" textLength="16.900000000000002" lengthAdjust="spacing">Feb</text>
<text transform="translate(748.7,605.8) rotate(-90)" class="xl2" textLength="16.900000000000002" lengthAdjust="spacing">Mar</text>
<text transform="translate(773.7,605.8) rotate(-90)" class="xl2" textLength="16.6" lengthAdjust="spacing">Apr</text>
<text transform="translate(798.7,605.8) rotate(-90)" class="xl2" textLength="18.1" lengthAdjust="spacing">May</text>
<text transform="translate(823.7,605.8) rotate(-90)" class="xl2" textLength="16.1" lengthAdjust="spacing">Jun</text>
<text transform="translate(848.7,605.8) rotate(-90)" class="xl2" textLength="13.6" lengthAdjust="spacing">Jul</text>
<text transform="translate(873.7,605.8) rotate(-90)" class="xl2" textLength="17.900000000000002" lengthAdjust="spacing">Aug</text>
<text transform="translate(898.7,605.8) rotate(-90)" class="xl2" textLength="17.400000000000002" lengthAdjust="spacing">Sep</text>
<text transform="translate(923.7,605.8) rotate(-90)" class="xl2" textLength="17.400000000000002" lengthAdjust="spacing">Dec</text>
</svg>
<!-- footer -->
<svg class="abs" style="left:0;top:629.5px" width="1005" height="41"><rect width="1005" height="41" fill="#97a5bd"/><path d="M0,0H54.5L9.5,41H0Z" fill="#0ba84f"/><path d="M54.5,0H73L107.5,41H9.5Z" fill="#6a9496"/></svg>
<span class="t" style="left:26.7px;top:11px;font-size:16px;color:#fff;letter-spacing:0.173px;font-weight:700;">Demographics</span>
<span class="t" style="left:270.2px;top:14px;font-size:11px;color:#9a9a9a;letter-spacing:-0.416px;font-style:italic;">Search</span>
<span class="t" style="left:844.1px;top:5px;font-size:18.6px;color:#fff;letter-spacing:0.718px;">Bellis-Jones Hill</span>
<span class="t" style="left:845.0px;top:28px;font-size:6.6px;color:#d9f2e3;letter-spacing:0.271px;">HEALTHCARE MANAGEMENT SOLUTIONS</span>
<span class="t" style="left:203.0px;top:46px;font-size:11px;color:#fff;letter-spacing:-0.388px;font-weight:700;">Selection</span>
<span class="t" style="left:279.8px;top:46px;font-size:11px;color:#fff;letter-spacing:-0.326px;font-weight:700;">Cost: £77,207,717</span>
<span class="t" style="left:385.7px;top:46px;font-size:11px;color:#fff;letter-spacing:-0.153px;font-weight:700;">Income: £77,811,036</span>
<span class="t" style="left:506.1px;top:46px;font-size:11px;color:#fff;letter-spacing:-0.208px;font-weight:700;">Profit/(Loss): £603,318</span>
<span class="t" style="left:637.1px;top:46px;font-size:11px;color:#fff;letter-spacing:-0.368px;font-weight:700;">Episodes  / Attendances: 190,581</span>
<span class="t" style="left:30.0px;top:92px;font-size:11px;color:#fff;letter-spacing:-0.379px;">&lt;&lt;</span>
<span class="t" style="left:105.9px;top:92px;font-size:11px;color:#fff;letter-spacing:0.321px;">Clear</span>
<span class="t" style="left:192.1px;top:92px;font-size:11px;color:#fff;letter-spacing:0.581px;">&gt;&gt;</span>
<span class="t" style="left:910.9px;top:85px;font-size:11px;color:#fff;letter-spacing:0.337px;">Lock</span>
<span class="t" style="left:957.4px;top:85px;font-size:11px;color:#fff;letter-spacing:0.995px;">Unlock</span>
<span class="t" style="left:287.5px;top:84px;font-size:11px;color:#fff;letter-spacing:0.568px;">Current Selections</span>
<span class="t" style="left:464.1px;top:84px;font-size:11px;color:#fff;letter-spacing:0.834px;">Bookmarks</span>
<span class="t" style="left:10.8px;top:126px;font-size:11px;color:#fff;letter-spacing:0.087px;font-weight:700;">Type</span>
<span class="t" style="left:84.8px;top:126px;font-size:11px;color:#fff;letter-spacing:0.290px;font-weight:700;">Year</span>
<span class="t" style="left:168.6px;top:126px;font-size:11px;color:#fff;letter-spacing:0.578px;font-weight:700;">Quarter</span>
<span class="t" style="left:101.4px;top:143px;font-size:9.5px;color:#444;letter-spacing:0.824px;">201101</span>
<span class="t" style="left:14.7px;top:168px;font-size:11px;color:#fff;letter-spacing:0.324px;">Cost Driver</span>
<span class="t" style="left:95.1px;top:168px;font-size:11px;color:#fff;letter-spacing:0.675px;">Specialty</span>
<span class="t" style="left:177.7px;top:168px;font-size:11px;color:#fff;letter-spacing:0.778px;">Patient</span>
<span class="t" style="left:12.0px;top:193px;font-size:11px;color:#fff;letter-spacing:-0.024px;font-weight:700;">Specialty</span>
<span class="t" style="left:11.1px;top:292px;font-size:11px;color:#fff;letter-spacing:0.878px;font-weight:700;">POD</span>
<span class="t" style="left:11.1px;top:420px;font-size:11px;color:#fff;letter-spacing:0.299px;font-weight:700;">Point of Delivery</span>
<span class="t" style="left:12.0px;top:535px;font-size:11px;color:#fff;letter-spacing:0.086px;font-weight:700;">Additional Specialty Selections</span>
<span class="t" style="left:8.2px;top:553px;font-size:10.2px;color:#303030;letter-spacing:-0.076px;">HRG/Appt Type</span>
<span class="t" style="left:8.2px;top:568px;font-size:10.2px;color:#303030;letter-spacing:0.174px;">Procedure/|Diagn...</span>
<span class="t" style="left:9.1px;top:583px;font-size:10.2px;color:#303030;letter-spacing:0.020px;">Consultant</span>
<span class="t" style="left:8.2px;top:598px;font-size:10.2px;color:#303030;letter-spacing:-0.095px;">NHS or Private</span>
<span class="t" style="left:252.1px;top:122px;font-size:10.5px;color:#fff;letter-spacing:0.412px;">Cost by Gender</span>
<span class="t" style="left:631.3px;top:122px;font-size:10.5px;color:#fff;letter-spacing:0.378px;">Episodes by Gender</span>
<span class="t" style="left:253.2px;top:284px;font-size:10.5px;color:#fff;letter-spacing:0.293px;">Cost by Age</span>
<span class="t" style="left:251.2px;top:462px;font-size:10.5px;color:#fff;letter-spacing:0.617px;">Day of Admission</span>
<span class="t" style="left:630.9px;top:462px;font-size:10.5px;color:#fff;letter-spacing:0.775px;">Month of Admission</span>
<span class="t" style="left:436.8px;top:156px;font-size:10.5px;color:#454545;letter-spacing:0.818px;">Gender</span>
<span class="t" style="left:458.1px;top:175px;font-size:10.5px;color:#454545;letter-spacing:1.093px;">Female</span>
<span class="t" style="left:458.1px;top:192px;font-size:10.5px;color:#454545;letter-spacing:1.871px;">Male</span>
<span class="t" style="left:458.1px;top:208px;font-size:10.5px;color:#454545;letter-spacing:1.303px;">Unknown</span>
<span class="t" style="left:540.0px;top:175px;font-size:10.5px;color:#454545;letter-spacing:0.159px;">£35,481,438</span>
<span class="t" style="left:540.0px;top:192px;font-size:10.5px;color:#454545;letter-spacing:0.159px;">£26,835,159</span>
<span class="t" style="left:575.8px;top:208px;font-size:10.5px;color:#454545;letter-spacing:0.254px;">£663</span>
<span class="t" style="left:778.8px;top:152px;font-size:10.5px;color:#454545;letter-spacing:0.638px;">Gender</span>
<span class="t" style="left:800.9px;top:171px;font-size:10.5px;color:#454545;letter-spacing:0.981px;">Female</span>
<span class="t" style="left:800.9px;top:187px;font-size:10.5px;color:#454545;letter-spacing:1.871px;">Male</span>
<span class="t" style="left:800.9px;top:203px;font-size:10.5px;color:#454545;letter-spacing:1.303px;">Unknown</span>
<span class="t" style="left:917.9px;top:171px;font-size:10.5px;color:#454545;letter-spacing:0.475px;">103,993</span>
<span class="t" style="left:925.0px;top:187px;font-size:10.5px;color:#454545;letter-spacing:0.175px;">86,500</span>
<span class="t" style="left:952.7px;top:203px;font-size:10.5px;color:#454545;letter-spacing:0.000px;">5</span>
<span class="t" style="left:265.8px;top:307px;font-size:10px;color:#454545;letter-spacing:0.078px;">2,000,000</span>
<span class="t" style="left:264.9px;top:336px;font-size:10px;color:#454545;letter-spacing:0.178px;">1,500,000</span>
<span class="t" style="left:264.9px;top:364px;font-size:10px;color:#454545;letter-spacing:0.178px;">1,000,000</span>
<span class="t" style="left:274.1px;top:393px;font-size:10px;color:#454545;letter-spacing:0.074px;">500,000</span>
<span class="t" style="left:305.0px;top:422px;font-size:10px;color:#454545;letter-spacing:0.000px;">0</span>
<span class="t" style="left:865.0px;top:325px;font-size:10px;color:#454545;letter-spacing:0.437px;">4000</span>
<span class="t" style="left:865.0px;top:349px;font-size:10px;color:#454545;letter-spacing:0.437px;">3000</span>
<span class="t" style="left:865.0px;top:373px;font-size:10px;color:#454545;letter-spacing:0.437px;">2000</span>
<span class="t" style="left:864.1px;top:398px;font-size:10px;color:#454545;letter-spacing:0.970px;">1000</span>
<span class="t" style="left:865.0px;top:422px;font-size:10px;color:#454545;letter-spacing:0.000px;">0</span>
<span class="t" style="left:859.6px;top:432px;font-size:9.5px;color:#454545;letter-spacing:-0.333px;">Age</span>
<span class="t" style="left:941.8px;top:315px;font-size:10.5px;color:#454545;letter-spacing:0.249px;">Cost</span>
<span class="t" style="left:940.9px;top:330px;font-size:10.5px;color:#454545;letter-spacing:0.838px;">Patients</span>
<span class="t" style="left:265.8px;top:490px;font-size:10px;color:#454545;letter-spacing:0.606px;">600</span>
<span class="t" style="left:265.8px;top:518px;font-size:10px;color:#454545;letter-spacing:0.606px;">400</span>
<span class="t" style="left:265.8px;top:546px;font-size:10px;color:#454545;letter-spacing:0.606px;">200</span>
<span class="t" style="left:278.0px;top:574px;font-size:10px;color:#454545;letter-spacing:0.000px;">0</span>
<span class="t" style="left:572.2px;top:493px;font-size:10px;color:#454545;letter-spacing:-0.007px;">40,000</span>
<span class="t" style="left:572.2px;top:534px;font-size:10px;color:#454545;letter-spacing:-0.007px;">20,000</span>
<span class="t" style="left:572.2px;top:574px;font-size:10px;color:#454545;letter-spacing:0.000px;">0</span>
<span class="t" style="left:567.0px;top:585px;font-size:10px;color:#454545;letter-spacing:0.211px;">Weekday</span>
<span class="t" style="left:403.8px;top:488px;font-size:10.5px;color:#555;letter-spacing:0.300px;">Average Episode Cost</span>
<span class="t" style="left:643.8px;top:502px;font-size:10px;color:#454545;letter-spacing:0.217px;">6,000</span>
<span class="t" style="left:643.8px;top:527px;font-size:10px;color:#454545;letter-spacing:0.217px;">4,000</span>
<span class="t" style="left:643.8px;top:551px;font-size:10px;color:#454545;letter-spacing:0.217px;">2,000</span>
<span class="t" style="left:663.0px;top:575px;font-size:10px;color:#454545;letter-spacing:0.000px;">0</span>
<span class="t" style="left:951.4px;top:504px;font-size:10px;color:#454545;letter-spacing:0.129px;">30,000</span>
<span class="t" style="left:951.4px;top:528px;font-size:10px;color:#454545;letter-spacing:0.129px;">20,000</span>
<span class="t" style="left:950.5px;top:551px;font-size:10px;color:#454545;letter-spacing:0.289px;">10,000</span>
<span class="t" style="left:951.4px;top:575px;font-size:10px;color:#454545;letter-spacing:0.000px;">0</span>
<span class="t" style="left:945.0px;top:586px;font-size:10px;color:#454545;letter-spacing:0.361px;">Weekday</span>
<span class="t" style="left:783.0px;top:488px;font-size:10.5px;color:#555;letter-spacing:0.295px;">Average Episode Cost</span>
<span class="t" style="left:798.9px;top:645px;font-size:10px;color:#f6f8fb;letter-spacing:0.005px;font-weight:700;">Last Reload: 19/10/2012 16:52:01</span>
<span class="t o1" style="left:21.1px;top:209px;font-size:9.6px;color:#2a2a2a;letter-spacing:-0.560px;font-weight:700;">100-GENERAL SURGERY</span>
<span class="t o2" style="left:21.1px;top:224px;font-size:9.6px;color:#2f2f2f;letter-spacing:-0.159px;">101-UROLOGY</span>
<span class="t o1" style="left:21.1px;top:239px;font-size:9.6px;color:#2a2a2a;letter-spacing:-0.694px;font-weight:700;">103-BREAST SURGERY</span>
<span class="t o2" style="left:21.1px;top:254px;font-size:9.6px;color:#2f2f2f;letter-spacing:-0.503px;">107-VASCULAR SURGERY</span>
<span class="t o1" style="left:21.1px;top:269px;font-size:9.6px;color:#2a2a2a;letter-spacing:-0.288px;font-weight:700;">110-TRAUMA &amp; ORTHOPAEDICS</span>
<span class="t o2" style="left:22.0px;top:309px;font-size:9.6px;color:#2f2f2f;letter-spacing:0.209px;">AE- Accident &amp; Emergency</span>
<span class="t o1" style="left:22.0px;top:324px;font-size:9.6px;color:#2a2a2a;letter-spacing:-0.102px;font-weight:700;">Audiology Level 3 (Patient Type Level</span>
<span class="t o2" style="left:22.0px;top:339px;font-size:9.6px;color:#2f2f2f;letter-spacing:0.123px;">Cardiac Level 3 (Patient Type Level)</span>
<span class="t o1" style="left:21.1px;top:354px;font-size:9.6px;color:#2a2a2a;letter-spacing:-0.269px;font-weight:700;">Direct Ac Level 3 (Patient Type Level)</span>
<span class="t o2" style="left:21.1px;top:369px;font-size:9.6px;color:#2f2f2f;letter-spacing:-0.254px;">Emergency in Other Dept Level 3 (Patient Typ</span>
<span class="t o1" style="left:22.0px;top:384px;font-size:9.6px;color:#2a2a2a;letter-spacing:-0.488px;font-weight:700;">Community Product Level 3 (Patient Type Level</span>
<span class="t o2" style="left:21.1px;top:399px;font-size:9.6px;color:#2f2f2f;letter-spacing:0.505px;">IP- Inpatient</span>
<span class="t o2" style="left:22.0px;top:437px;font-size:9.6px;color:#2f2f2f;letter-spacing:0.166px;">AE- Accident &amp; Emergency</span>
<span class="t o1" style="left:22.0px;top:452px;font-size:9.6px;color:#2a2a2a;letter-spacing:-0.255px;font-weight:700;">Audiology Level 4 (POD Level)</span>
<span class="t o2" style="left:22.0px;top:467px;font-size:9.6px;color:#2f2f2f;letter-spacing:0.103px;">Cardiac Level 4 (POD Level)</span>
<span class="t o1" style="left:21.1px;top:482px;font-size:9.6px;color:#2a2a2a;letter-spacing:-0.301px;font-weight:700;">Direct Ac Level 4 (POD Level)</span>
<span class="t o2" style="left:21.1px;top:497px;font-size:9.6px;color:#2f2f2f;letter-spacing:-0.326px;">Emergency in Other Dept Level 4 (POD Level)</span>
<span class="t o1" style="left:21.1px;top:511px;font-size:9.6px;color:#2a2a2a;letter-spacing:-0.375px;font-weight:700;">DC- Day Case</span>
</body></html>
